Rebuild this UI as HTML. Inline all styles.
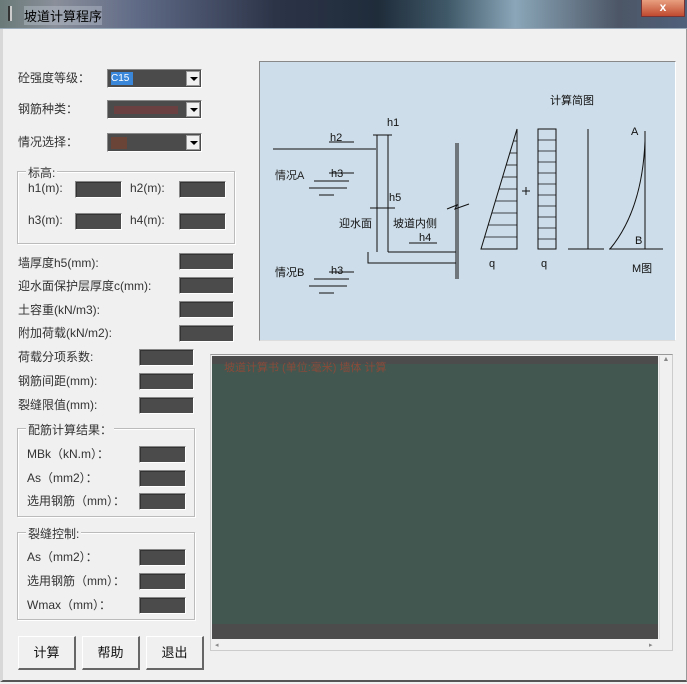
<!DOCTYPE html>
<html><head><meta charset="utf-8"><style>
*{margin:0;padding:0;box-sizing:border-box}
body{width:687px;height:684px;overflow:hidden;background:#f0f0f0;font-family:"Liberation Sans","Noto Sans CJK SC",sans-serif;font-size:12px;color:#222;position:relative}
.a{position:absolute}
.title{left:0;top:0;width:687px;height:29px;background:linear-gradient(90deg,#6a7a78 0%,#8a8f9a 8%,#5f6a86 20%,#2c3448 40%,#1f2c3a 55%,#3f5868 65%,#8aa6b8 75%,#4c5666 90%,#50607a 100%);border-bottom:1px solid #9ab}
.title span{position:absolute;left:24px;top:6px;font-size:13px;color:#000;background:rgba(200,210,220,.35)}
.close{left:641px;top:0;width:44px;height:17px;background:linear-gradient(#e8a080,#c04a30);border:1px solid #733;border-top:none;color:#fff;font-size:12px;text-align:center;line-height:15px;font-weight:bold}
.frame{left:0;top:29px;width:687px;height:653px;border-left:3px solid #d8d8d8;border-right:1px solid #999;border-bottom:2px solid #555}
.lbl{position:absolute;font-size:12px;color:#333;white-space:nowrap}
.inp{position:absolute;background:#4b4b4b;border:1px solid #fff;border-top-color:#888;border-left-color:#888;box-shadow:inset 1px 1px 0 #333}
.combo{position:absolute;background:#4b4b4b;border:1px solid #888;border-right-color:#fff;border-bottom-color:#fff;height:19px}
.combo .btn{position:absolute;right:1px;top:1px;width:14px;height:15px;background:#f0f0f0;border:1px solid #999}
.combo .btn:after{content:"";position:absolute;left:3px;top:5px;border:4px solid transparent;border-top:4px solid #000}
.grp{position:absolute;border:1px solid #bbb;box-shadow:1px 1px 0 #fff inset,1px 1px 0 #fff}
.grp .t{position:absolute;left:8px;top:-8px;background:#f0f0f0;padding:0 2px;font-size:12px;color:#333}
.b{position:absolute;height:34px;border-right:2px solid #666;border-bottom:2px solid #666;border-top:1px solid #fff;border-left:1px solid #fff;text-align:center;line-height:32px;font-size:13px;color:#111}
</style></head><body>
<div class="a title"><span>坡道计算程序</span><div style="position:absolute;left:8px;top:6px;width:4px;height:15px;background:#ccc;border-left:2px solid #333"></div></div>
<div class="a close">x</div>
<div class="a frame"></div>

<div class="lbl" style="left:18px;top:69px">砼强度等级：</div>
<div class="combo" style="left:107px;top:69px;width:95px"><div style="position:absolute;left:3px;top:2px;width:22px;height:13px;background:#3a86d8;color:#fff;font-size:10px;line-height:13px">C15</div><div class="btn"></div></div>
<div class="lbl" style="left:18px;top:100px">钢筋种类：</div>
<div class="combo" style="left:107px;top:100px;width:95px"><div style="position:absolute;left:6px;top:5px;width:64px;height:8px;background:#6a4040"></div><div class="btn"></div></div>
<div class="lbl" style="left:18px;top:133px">情况选择：</div>
<div class="combo" style="left:107px;top:133px;width:95px"><div style="position:absolute;left:3px;top:3px;width:16px;height:12px;background:#6a4436"></div><div class="btn"></div></div>

<div class="grp" style="left:17px;top:171px;width:218px;height:73px"><div class="t">标高:</div></div>
<div class="lbl" style="left:28px;top:181px">h1(m):</div><div class="inp" style="left:75px;top:181px;width:47px;height:17px"></div>
<div class="lbl" style="left:130px;top:181px">h2(m):</div><div class="inp" style="left:179px;top:181px;width:47px;height:17px"></div>
<div class="lbl" style="left:28px;top:213px">h3(m):</div><div class="inp" style="left:75px;top:213px;width:47px;height:17px"></div>
<div class="lbl" style="left:130px;top:213px">h4(m):</div><div class="inp" style="left:179px;top:213px;width:47px;height:17px"></div>

<div class="lbl" style="left:18px;top:254px">墙厚度h5(mm):</div><div class="inp" style="left:179px;top:253px;width:55px;height:17px"></div>
<div class="lbl" style="left:18px;top:277px">迎水面保护层厚度c(mm):</div><div class="inp" style="left:179px;top:277px;width:55px;height:17px"></div>
<div class="lbl" style="left:18px;top:301px">土容重(kN/m3):</div><div class="inp" style="left:179px;top:301px;width:55px;height:17px"></div>
<div class="lbl" style="left:18px;top:324px">附加荷载(kN/m2):</div><div class="inp" style="left:179px;top:325px;width:55px;height:17px"></div>
<div class="lbl" style="left:18px;top:348px">荷载分项系数:</div><div class="inp" style="left:139px;top:349px;width:55px;height:17px"></div>
<div class="lbl" style="left:18px;top:372px">钢筋间距(mm):</div><div class="inp" style="left:139px;top:373px;width:55px;height:17px"></div>
<div class="lbl" style="left:18px;top:396px">裂缝限值(mm):</div><div class="inp" style="left:139px;top:397px;width:55px;height:17px"></div>

<div class="grp" style="left:17px;top:428px;width:178px;height:89px"><div class="t">配筋计算结果：</div></div>
<div class="lbl" style="left:27px;top:445px">MBk（kN.m）：</div><div class="inp" style="left:139px;top:446px;width:47px;height:17px"></div>
<div class="lbl" style="left:27px;top:469px">As（mm2）：</div><div class="inp" style="left:139px;top:470px;width:47px;height:17px"></div>
<div class="lbl" style="left:27px;top:492px">选用钢筋（mm）：</div><div class="inp" style="left:139px;top:493px;width:47px;height:17px"></div>

<div class="grp" style="left:17px;top:532px;width:178px;height:88px"><div class="t">裂缝控制:</div></div>
<div class="lbl" style="left:27px;top:548px">As（mm2）：</div><div class="inp" style="left:139px;top:549px;width:47px;height:17px"></div>
<div class="lbl" style="left:27px;top:572px">选用钢筋（mm）：</div><div class="inp" style="left:139px;top:573px;width:47px;height:17px"></div>
<div class="lbl" style="left:27px;top:596px">Wmax（mm）：</div><div class="inp" style="left:139px;top:597px;width:47px;height:17px"></div>

<div class="b" style="left:18px;top:636px;width:58px">计算</div>
<div class="b" style="left:82px;top:636px;width:58px">帮助</div>
<div class="b" style="left:146px;top:636px;width:58px">退出</div>

<div class="a" style="left:259px;top:61px;width:417px;height:280px;background:#cddde9;border:1px solid #888;border-right-color:#fff;border-bottom-color:#ddd">
<svg width="417" height="280" style="position:absolute;left:-1px;top:-1px" font-family="Liberation Sans,Noto Sans CJK SC,sans-serif" font-size="11" fill="#111">
<g stroke="#111" stroke-width="1" fill="none">
<line x1="14" y1="88" x2="117" y2="88"/>
<line x1="118" y1="74" x2="118" y2="191"/><line x1="129" y1="74" x2="129" y2="191"/>
<line x1="114" y1="74" x2="133" y2="74"/>
<polyline points="109,191 109,202 197,202"/><line x1="129" y1="191" x2="197" y2="191"/>
<line x1="199" y1="82" x2="199" y2="218"/><line x1="197" y1="82" x2="197" y2="218"/>
<polyline points="188,148 198,144 196,148 210,143"/>
<line x1="70" y1="81" x2="95" y2="81"/><line x1="70" y1="112" x2="95" y2="112"/><line x1="55" y1="120" x2="90" y2="120"/><line x1="50" y1="127" x2="88" y2="127"/><line x1="60" y1="134" x2="75" y2="134"/>
<line x1="70" y1="211" x2="95" y2="211"/><line x1="55" y1="218" x2="90" y2="218"/><line x1="50" y1="225" x2="88" y2="225"/><line x1="60" y1="232" x2="75" y2="232"/>
<line x1="150" y1="182" x2="178" y2="182"/>
<line x1="111" y1="147" x2="136" y2="147"/>
<polygon points="222,188 258,68 258,188"/>
<g stroke-width="0.8"><line x1="255" y1="80" x2="258" y2="80"/><line x1="251" y1="92" x2="258" y2="92"/><line x1="247" y1="104" x2="258" y2="104"/><line x1="244" y1="116" x2="258" y2="116"/><line x1="240" y1="128" x2="258" y2="128"/><line x1="237" y1="140" x2="258" y2="140"/><line x1="233" y1="152" x2="258" y2="152"/><line x1="229" y1="164" x2="258" y2="164"/><line x1="226" y1="176" x2="258" y2="176"/></g>
<rect x="279" y="68" width="18" height="120"/>
<g stroke-width="0.8"><line x1="279" y1="79" x2="297" y2="79"/><line x1="279" y1="90" x2="297" y2="90"/><line x1="279" y1="101" x2="297" y2="101"/><line x1="279" y1="112" x2="297" y2="112"/><line x1="279" y1="123" x2="297" y2="123"/><line x1="279" y1="134" x2="297" y2="134"/><line x1="279" y1="145" x2="297" y2="145"/><line x1="279" y1="156" x2="297" y2="156"/><line x1="279" y1="167" x2="297" y2="167"/><line x1="279" y1="178" x2="297" y2="178"/></g>
<line x1="329" y1="68" x2="329" y2="188"/><line x1="309" y1="188" x2="345" y2="188"/>
<line x1="386" y1="70" x2="386" y2="188"/><line x1="350" y1="188" x2="404" y2="188"/>
<path d="M386,80 C384,130 370,165 351,188"/>
<line x1="263" y1="130" x2="271" y2="130"/><line x1="267" y1="126" x2="267" y2="134"/>
</g>
<text x="291" y="43">计算简图</text>
<text x="128" y="65">h1</text><text x="71" y="80">h2</text><text x="72" y="116">h3</text><text x="72" y="213">h3</text>
<text x="16" y="118" fill="#222">情况A</text><text x="16" y="215">情况B</text>
<text x="130" y="140">h5</text><text x="80" y="166">迎水面</text><text x="134" y="166">坡道内侧</text><text x="160" y="180">h4</text>
<text x="230" y="206">q</text><text x="282" y="206">q</text><text x="372" y="74">A</text><text x="376" y="183">B</text><text x="373" y="211">M图</text>
</svg></div>

<div class="a" style="left:210px;top:354px;width:463px;height:297px;border:1px solid #ccc;border-top-color:#999;background:#f0f0f0">
<div style="position:absolute;left:1px;top:1px;width:446px;height:283px;background:#425750">
<div style="position:absolute;left:0;top:0;width:446px;height:8px;background:#4c4c4c"></div>
<div style="position:absolute;left:12px;top:3px;font-size:11px;color:#8a4a3a;white-space:nowrap">坡道计算书 (单位:毫米) 墙体 计算</div>
<div style="position:absolute;left:0;top:268px;width:446px;height:15px;background:#4c4c4c"></div>
</div>
<div style="position:absolute;left:448px;top:1px;width:13px;height:283px;background:#f0f0f0;border-left:1px solid #ddd;font-size:7px;color:#888;text-align:center">▲</div>
<div style="position:absolute;left:4px;top:286px;font-size:7px;color:#888">◂</div>
<div style="position:absolute;left:438px;top:286px;font-size:7px;color:#888">▸</div>
</div>
</body></html>
